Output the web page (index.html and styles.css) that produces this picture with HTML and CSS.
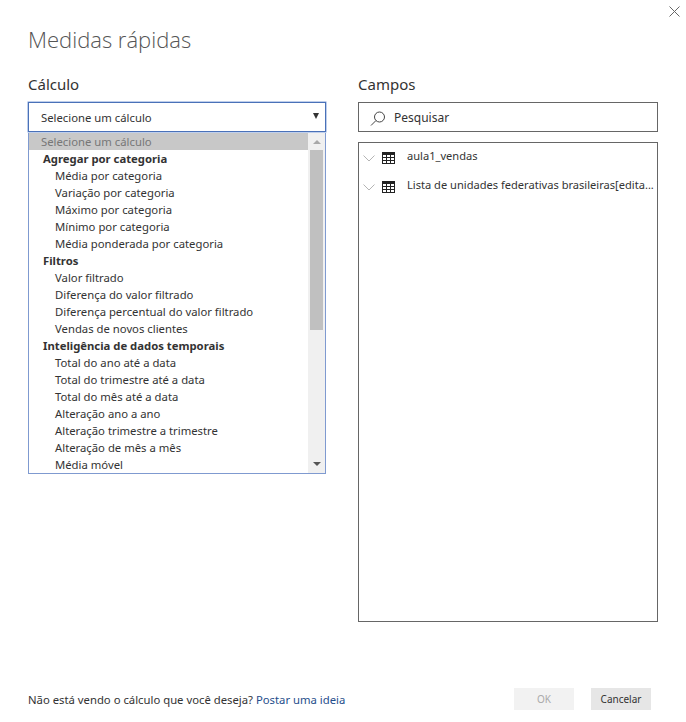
FILE: index.html
```html
<!DOCTYPE html>
<html lang="pt">
<head>
<meta charset="utf-8">
<title>Medidas rápidas</title>
<link rel="stylesheet" href="styles.css">
</head>
<body>
<div class="dialog">
  <svg class="close" width="11" height="11" viewBox="0 0 11 11"><path d="M.5.5l10 10M10.5.5l-10 10" stroke="#666" fill="none"/></svg>
  <h1 class="title">Medidas rápidas</h1>
  <div class="columns">
    <section class="col-calc">
      <h2 class="label">Cálculo</h2>
      <div class="select"><span>Selecione um cálculo</span><i class="caret"></i></div>
      <div class="list">
        <ul class="options">
          <li class="opt placeholder">Selecione um cálculo</li>
          <li class="opt group">Agregar por categoria</li>
          <li class="opt">Média por categoria</li>
          <li class="opt">Variação por categoria</li>
          <li class="opt">Máximo por categoria</li>
          <li class="opt">Mínimo por categoria</li>
          <li class="opt">Média ponderada por categoria</li>
          <li class="opt group">Filtros</li>
          <li class="opt">Valor filtrado</li>
          <li class="opt">Diferença do valor filtrado</li>
          <li class="opt">Diferença percentual do valor filtrado</li>
          <li class="opt">Vendas de novos clientes</li>
          <li class="opt group">Inteligência de dados temporais</li>
          <li class="opt">Total do ano até a data</li>
          <li class="opt">Total do trimestre até a data</li>
          <li class="opt">Total do mês até a data</li>
          <li class="opt">Alteração ano a ano</li>
          <li class="opt">Alteração trimestre a trimestre</li>
          <li class="opt">Alteração de mês a mês</li>
          <li class="opt">Média móvel</li>
        </ul>
        <div class="scrollbar">
          <i class="arrow up"></i>
          <div class="thumb"></div>
          <div class="track"></div>
          <i class="arrow down"></i>
        </div>
      </div>
    </section>
    <section class="col-fields">
      <h2 class="label">Campos</h2>
      <div class="search">
        <svg width="18" height="18" viewBox="0 0 18 18"><circle cx="9.5" cy="9" r="5" fill="none" stroke="#444"/><path d="M6 12.5l-5 5" stroke="#444" fill="none"/></svg>
        <span>Pesquisar</span>
      </div>
      <div class="fields">
        <div class="field">
          <svg class="chev" width="12" height="7" viewBox="0 0 12 7"><path d="M.5.5L6 6 11.5.5" stroke="#b4b4b4" fill="none"/></svg>
          <svg class="tbl" width="13" height="12" viewBox="0 0 13 12"><path fill="#222" d="M0 0h13v12H0z"/><path fill="#fff" d="M1 3h3v2H1zM5 3h3v2H5zM9 3h3v2H9zM1 6h3v2H1zM5 6h3v2H5zM9 6h3v2H9zM1 9h3v2H1zM5 9h3v2H5zM9 9h3v2H9z"/></svg>
          <span class="fname">aula1_vendas</span>
        </div>
        <div class="field">
          <svg class="chev" width="12" height="7" viewBox="0 0 12 7"><path d="M.5.5L6 6 11.5.5" stroke="#b4b4b4" fill="none"/></svg>
          <svg class="tbl" width="13" height="12" viewBox="0 0 13 12"><path fill="#222" d="M0 0h13v12H0z"/><path fill="#fff" d="M1 3h3v2H1zM5 3h3v2H5zM9 3h3v2H9zM1 6h3v2H1zM5 6h3v2H5zM9 6h3v2H9zM1 9h3v2H1zM5 9h3v2H5zM9 9h3v2H9z"/></svg>
          <span class="fname">Lista de unidades federativas brasileiras[edita...</span>
        </div>
      </div>
    </section>
  </div>
  <footer class="footer">
    <p class="hint">Não está vendo o cálculo que você deseja? <a class="link" href="#">Postar uma ideia</a></p>
    <div class="buttons">
      <button class="btn disabled" type="button">OK</button>
      <button class="btn" type="button">Cancelar</button>
    </div>
  </footer>
</div>
</body>
</html>
```
FILE: styles.css
```css
* { box-sizing: border-box; }
html, body { margin: 0; height: 100%; background: #fff; }
body { font-family: "Noto Sans", "Open Sans", sans-serif; color: #333; font-size: 11.3px; overflow: hidden; }
.dialog { position: relative; width: 686px; height: 722px; padding: 24px 28px 12px; display: flex; flex-direction: column; }
.close { position: absolute; top: 6px; right: 6px; }
.title { margin: 0; font-size: 22px; line-height: 30px; font-weight: 300; font-family: "Open Sans", sans-serif; color: #555; }
.columns { display: flex; gap: 32px; margin-top: 19px; flex: 1; }
.label { margin: 0 0 7px; font-size: 15px; line-height: 22px; font-weight: 400; color: #333; }
.col-calc { width: 298px; }
.col-fields { width: 300px; }
.select { height: 30px; border: 1px solid #4a71b8; box-shadow: 0 0 0 .5px #7f9fd8; padding: 0 6px 0 12px; display: flex; align-items: center; justify-content: space-between; }
.caret { width: 0; height: 0; border-left: 3px solid transparent; border-right: 3px solid transparent; border-top: 6px solid #333; margin-top: -2px; }
.list { display: flex; height: 341px; margin-top: 1px; border: 1px solid #7f9ad0; border-top: 0; overflow: hidden; }
.options { list-style: none; margin: 0; padding: 0; flex: 1; min-width: 0; }
.opt { height: 17px; line-height: 17px; padding-left: 26px; white-space: nowrap; }
.group { padding-left: 14px; font-weight: 700; }
.placeholder { padding-left: 12px; background: #c8c8c8; color: #777; }
.scrollbar { width: 17px; background: #f0f0f0; display: flex; flex-direction: column; align-items: center; }
.arrow { width: 0; height: 0; border-left: 4px solid transparent; border-right: 4px solid transparent; flex: none; }
.up { border-bottom: 4px solid #a8a8a8; margin: 7px 0 6px; }
.thumb { width: 13px; height: 180px; background: #c0c0c0; flex: none; }
.track { flex: 1; }
.down { border-top: 4px solid #555; margin: 0 0 7px; }
.search { height: 30px; border: 1px solid #666; padding-left: 11px; display: flex; align-items: center; gap: 6px; font-size: 12px; }
.fields { height: 480px; margin-top: 10px; border: 1px solid #666; }
.field { height: 29px; display: flex; align-items: center; padding-left: 4px; }
.chev { flex: none; margin-top: 2px; }
.tbl { flex: none; margin: 1px 0 0 7px; }
.fname { margin: -5px 0 0 12px; white-space: nowrap; font-size: 11.1px; }
.footer { display: flex; align-items: center; justify-content: space-between; height: 22px; padding-right: 7px; }
.hint { margin: 0; }
.link { color: #1f4e8c; text-decoration: none; }
.buttons { display: flex; gap: 17px; }
.btn { width: 60px; height: 22px; border: 0; padding: 0; background: #e6e6e6; font: inherit; font-size: 10px; color: #333; }
.disabled { background: #f2f2f2; color: #aaa; }
```
